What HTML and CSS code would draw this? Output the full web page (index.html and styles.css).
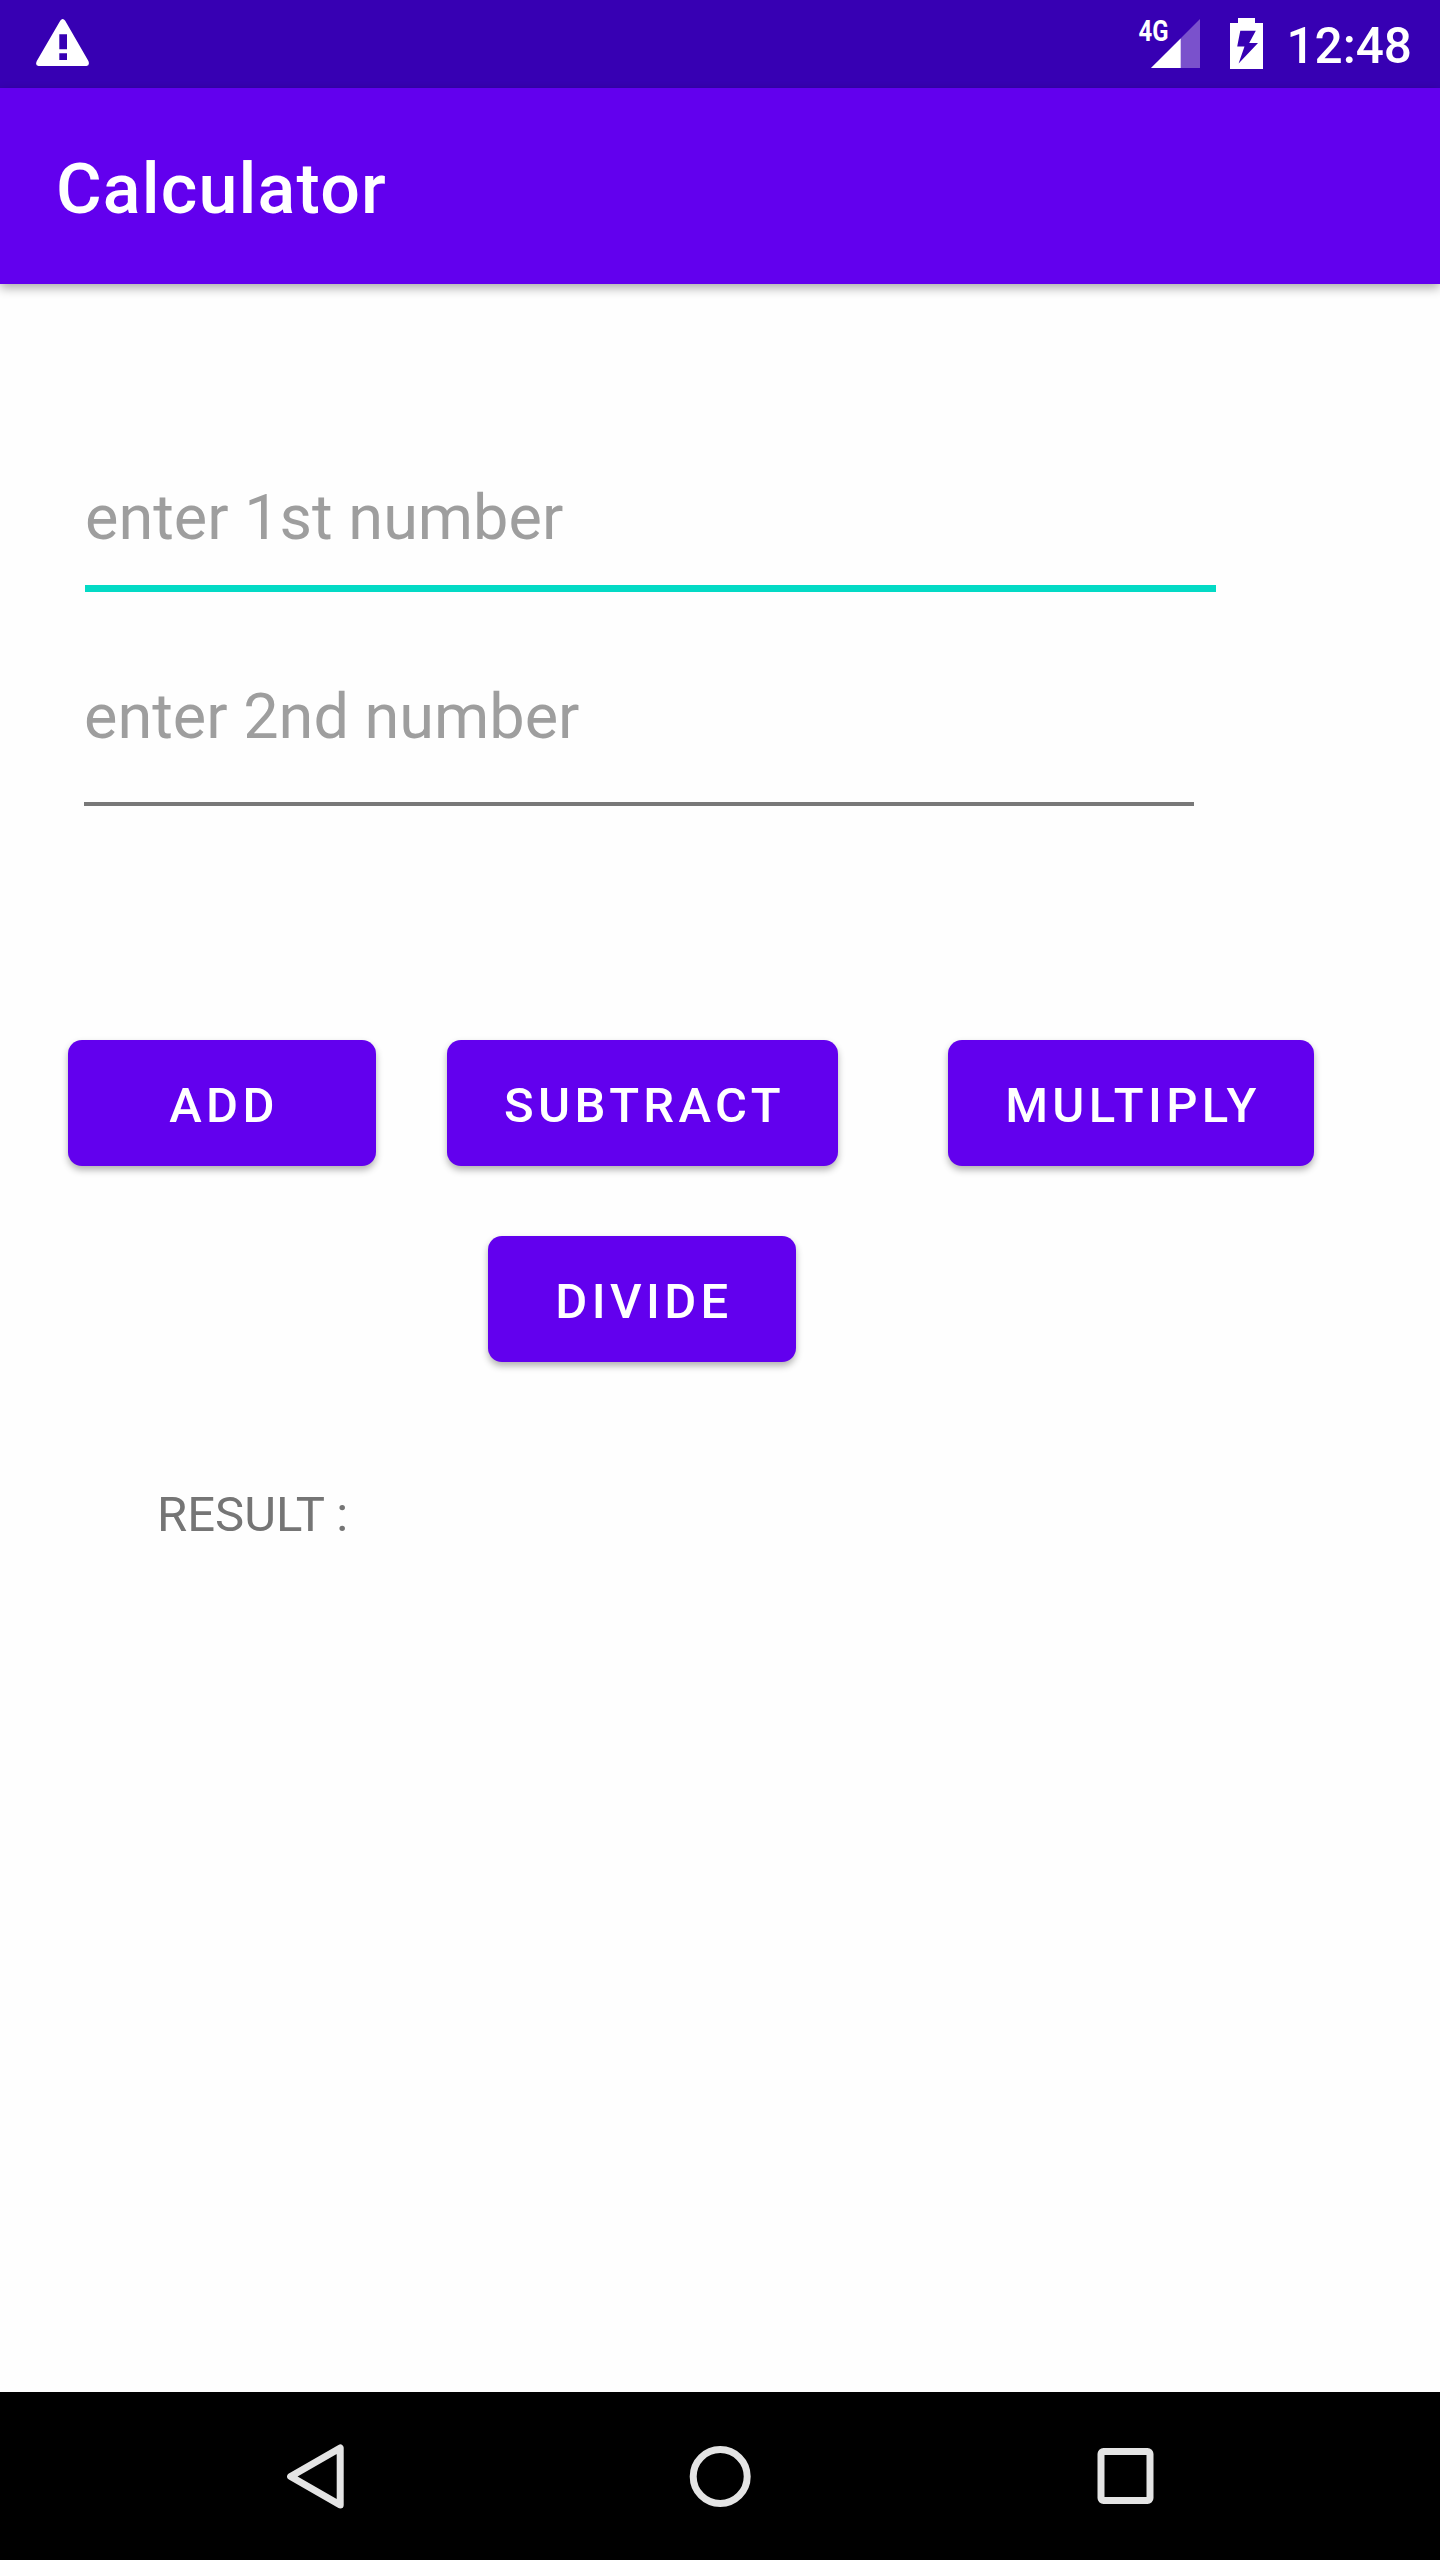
FILE: index.html
```html
<!DOCTYPE html>
<html lang="en">
<head>
<meta charset="utf-8">
<title>Calculator</title>
<link rel="stylesheet" href="styles.css">
</head>
<body>
<div class="screen">
  <header class="status-bar">
    <svg class="icon-warning" width="54" height="48" viewBox="0 0 54 48" fill="#fff">
      <path fill-rule="evenodd" d="M24.2 1.8Q26.7-1.600 29.200 1.800L52.400 42Q54 46.600 50.500 47H2.500Q-1.200 46.600 .8 42ZM23.300 15.200V30.200H31V15.200ZM23.300 34.200V41H31V34.200Z"/>
    </svg>
    <div class="status-icons">
      <svg class="icon-signal" width="68" height="64" viewBox="-4 -12 68 64">
        <path d="M62 1V50H13Z" fill="#7a51cc"/>
        <path d="M42.700 20.600V50H13Z" fill="#fff"/>
        <text class="network" x="0.500" y="23" textLength="30" lengthAdjust="spacingAndGlyphs">4G</text>
      </svg>
      <svg class="icon-battery" width="33" height="51" viewBox="0 0 33 51" fill="#fff">
        <path fill-rule="evenodd" d="M0 5H8V0H25V5H33V51H0ZM10.300 12.700L7.200 28.500H14.500L8.600 45.500L28 25H19.200L25.800 12.700Z"/>
      </svg>
      <span class="clock">12:48</span>
    </div>
  </header>
  <div class="app-bar"><h1 class="title">Calculator</h1></div>
  <main class="content">
    <div class="field field-focused" role="textbox">enter 1st number</div>
    <div class="field field-idle" role="textbox">enter 2nd number</div>
    <div class="actions">
      <button class="button button-add">ADD</button>
      <button class="button button-subtract">SUBTRACT</button>
      <button class="button button-multiply">MULTIPLY</button>
    </div>
    <button class="button button-divide">DIVIDE</button>
    <p class="result">RESULT :</p>
  </main>
  <nav class="nav-bar">
    <svg width="66" height="66" viewBox="0 0 66 66" fill="none" stroke="#e4e4e4" stroke-width="7" stroke-linejoin="round">
      <path d="M58.200 4V61L8.600 32.500Z"/>
    </svg>
    <svg width="66" height="66" viewBox="0 0 66 66" fill="none" stroke="#e4e4e4" stroke-width="7">
      <circle cx="33.200" cy="32.500" r="27"/>
    </svg>
    <svg width="66" height="66" viewBox="0 0 66 66" fill="none" stroke="#e4e4e4" stroke-width="7">
      <rect x="9" y="7.500" width="49" height="49" rx="2.500"/>
    </svg>
  </nav>
</div>
</body>
</html>
```
FILE: styles.css
```css
* {
  box-sizing: border-box;
}

body {
  margin: 0;
  font-family: Roboto, sans-serif;
  background: #fefefe;
}

svg {
  display: block;
}

.screen {
  display: flex;
  flex-direction: column;
  width: 1440px;
  height: 2560px;
}

.status-bar {
  display: flex;
  justify-content: space-between;
  align-items: flex-start;
  height: 88px;
  padding: 18px 28px 0 36px;
  background: #3700b3;
}

.icon-warning {
  margin-top: 1px;
}

.status-icons {
  display: flex;
  align-items: flex-start;
}

.icon-signal {
  margin-top: -12px;
}

.icon-battery {
  margin-left: 28px;
}

.network {
  font-size: 29px;
  font-weight: 700;
  fill: #fff;
}

.clock {
  margin-left: 23.5px;
  color: #fff;
  font-size: 49.5px;
  font-weight: 500;
  line-height: 56px;
}

.app-bar {
  position: relative;
  height: 196px;
  padding: 6px 56px 0;
  background: #6200ee;
  box-shadow: 0 4px 10px rgba(0, 0, 0, 0.33);
}

.title {
  margin: 0;
  color: #fff;
  font-size: 70px;
  font-weight: 500;
  letter-spacing: 1.17px;
  line-height: 190px;
}

.content {
  flex: 1;
  display: flex;
  flex-direction: column;
  align-items: flex-start;
}

.field {
  color: #9e9e9e;
  font-size: 63px;
  line-height: 76px;
}

.field-focused {
  width: 1131px;
  height: 112px;
  margin: 196px 0 0 85px;
  border-bottom: 7px solid #03dac5;
}

.field-idle {
  width: 1110px;
  height: 127px;
  margin: 87px 0 0 84px;
  border-bottom: 4px solid #787878;
}

.actions {
  display: flex;
  margin: 234px 0 0 68px;
}

.button {
  height: 126px;
  padding: 4px 0 0 4px;
  border: 0;
  border-radius: 14px;
  background: #6200ee;
  box-shadow: 0 4px 7px rgba(0, 0, 0, 0.3);
  color: #fff;
  font-family: inherit;
  font-size: 49px;
  font-weight: 500;
  letter-spacing: 0.0893em;
}

.button-add,
.button-divide {
  width: 308px;
}

.button-subtract {
  width: 391px;
  margin-left: 71px;
}

.button-multiply {
  width: 366px;
  margin-left: 110px;
}

.button-divide {
  margin: 70px 0 0 488px;
}

.result {
  margin: 124px 0 0 157px;
  color: #757575;
  font-size: 49px;
  line-height: 58px;
}

.nav-bar {
  display: flex;
  justify-content: center;
  gap: 339px;
  height: 168px;
  padding-top: 52px;
  background: #000;
}
```
